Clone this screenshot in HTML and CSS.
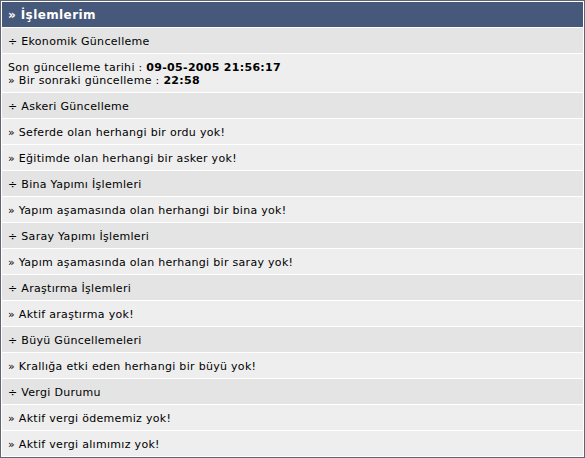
FILE: index.html
```html
<!DOCTYPE html>
<html lang="tr">
<head>
    <meta charset="UTF-8">
    <title>İşlemlerim</title>
    <link rel="stylesheet" href="styles.css">
</head>
<body>
    <table class="panel">
        <tr><td class="panel-title">&raquo; İşlemlerim</td></tr>

        <!-- Ekonomi -->
        <tr><td class="section">&divide; Ekonomik Güncelleme</td></tr>
        <tr><td class="item">Son güncelleme tarihi : <b>09-05-2005 21:56:17</b><br>&raquo; Bir sonraki güncelleme : <b>22:58</b></td></tr>

        <!-- Askeri -->
        <tr><td class="section">&divide; Askeri Güncelleme</td></tr>
        <tr><td class="item">&raquo; Seferde olan herhangi bir ordu yok!</td></tr>
        <tr><td class="item">&raquo; Eğitimde olan herhangi bir asker yok!</td></tr>

        <!-- Bina -->
        <tr><td class="section">&divide; Bina Yapımı İşlemleri</td></tr>
        <tr><td class="item">&raquo; Yapım aşamasında olan herhangi bir bina yok!</td></tr>

        <!-- Saray -->
        <tr><td class="section">&divide; Saray Yapımı İşlemleri</td></tr>
        <tr><td class="item">&raquo; Yapım aşamasında olan herhangi bir saray yok!</td></tr>

        <!-- Araştırma -->
        <tr><td class="section">&divide; Araştırma İşlemleri</td></tr>
        <tr><td class="item">&raquo; Aktif araştırma yok!</td></tr>

        <!-- Büyü -->
        <tr><td class="section">&divide; Büyü Güncellemeleri</td></tr>
        <tr><td class="item">&raquo; Krallığa etki eden herhangi bir büyü yok!</td></tr>

        <!-- Vergi -->
        <tr><td class="section">&divide; Vergi Durumu</td></tr>
        <tr><td class="item">&raquo; Aktif vergi ödememiz yok!</td></tr>
        <tr><td class="item">&raquo; Aktif vergi alımımız yok!</td></tr>
    </table>
</body>
</html>
```

FILE: styles.css
```css
body {
    margin: 0;
    padding: 0;
    background-color: #fff;
    font-family: Verdana, "DejaVu Sans", sans-serif;
    font-size: 11px;
    letter-spacing: 0.3px;
    color: #000;
}

.panel {
    width: 585px;
    border: 1px solid #5f6572;
    border-spacing: 1px;
    background-color: #fff;
}

.panel td {
    padding: 7px 6px 5px;
    line-height: 13px;
    text-align: left;
}

.panel td.panel-title {
    background-color: #47597a;
    color: #fff;
    font-weight: bold;
    font-size: 12px;
    letter-spacing: 0.4px;
}

.section {
    background-color: #e3e4e3;
}

.item {
    background-color: #eeeeee;
}
```
